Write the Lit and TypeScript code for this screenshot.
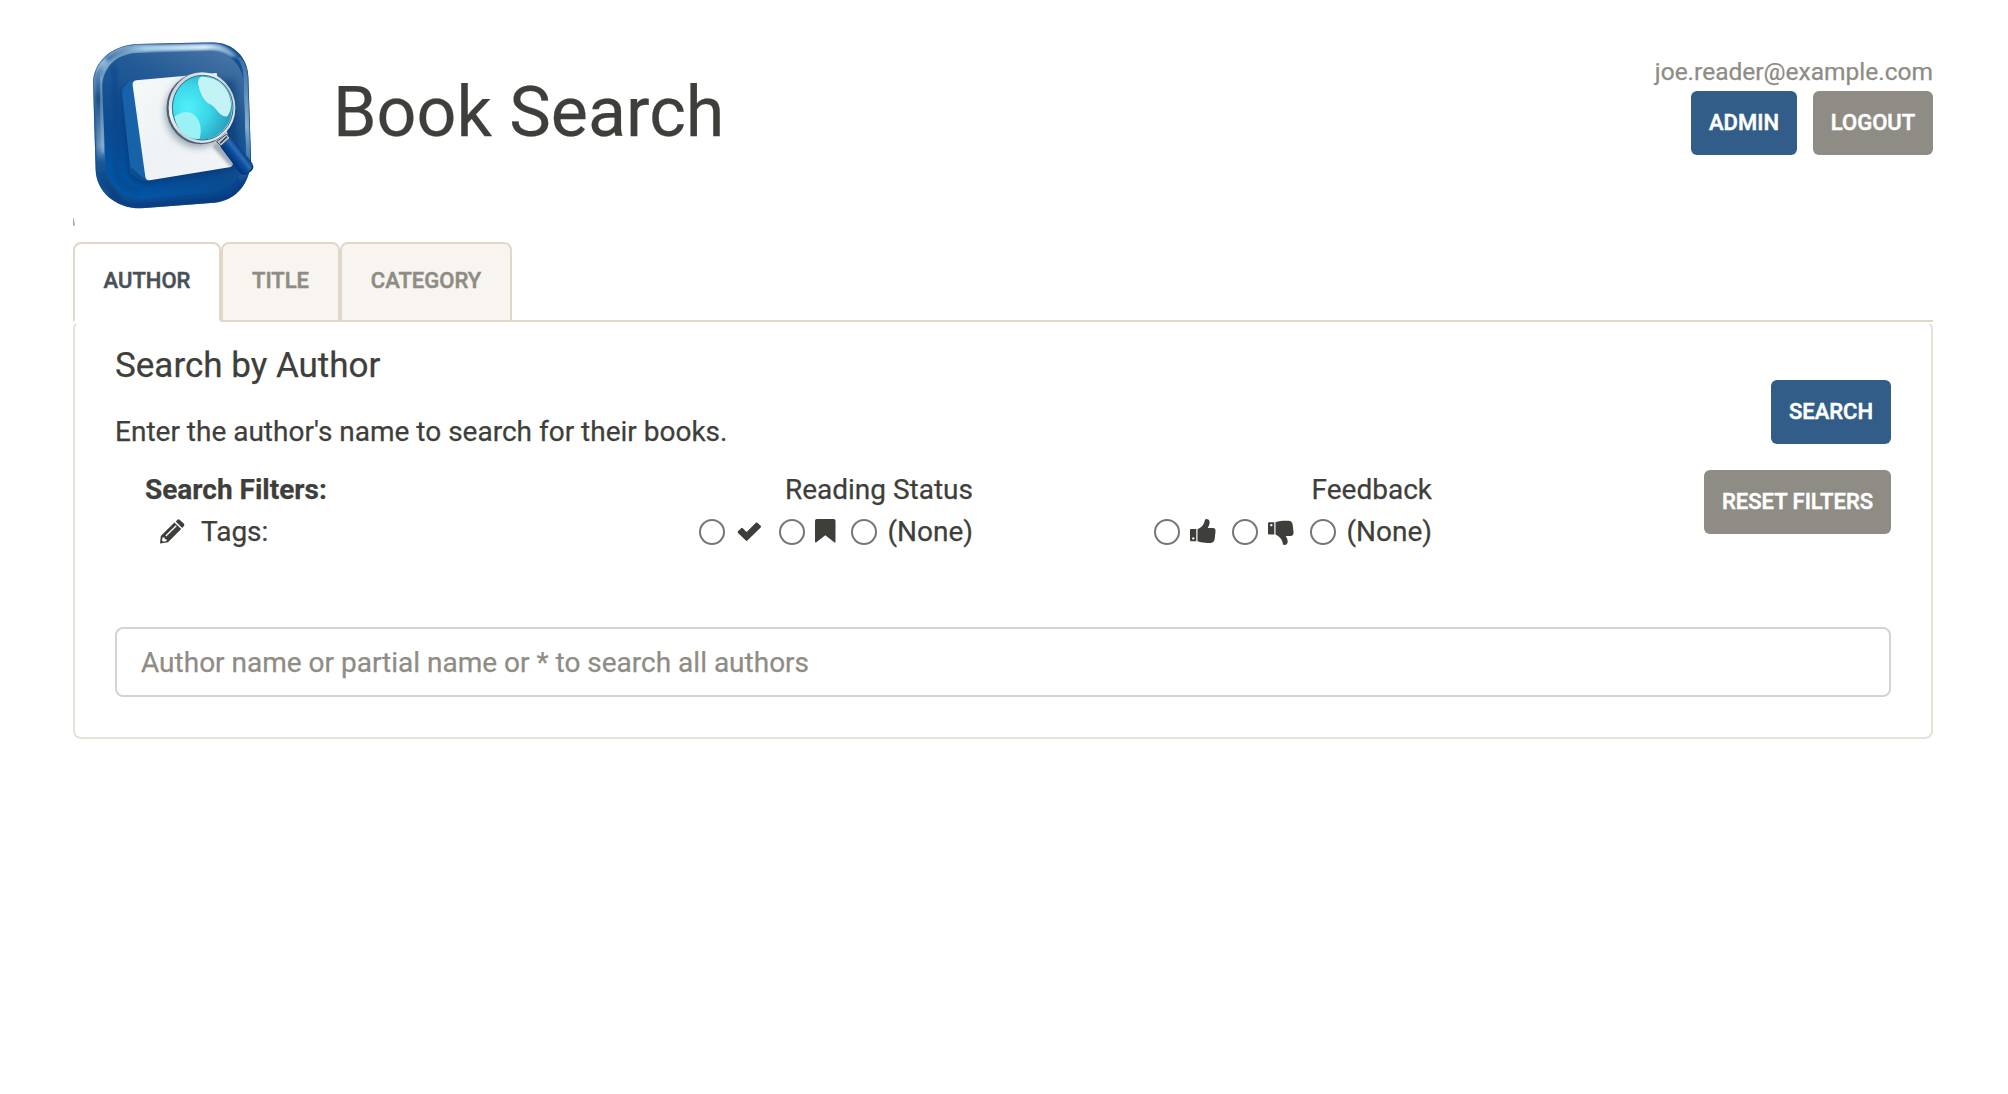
import { LitElement, html, css, svg } from "lit";
import { customElement, property, state } from "lit/decorators.js";

const icons = {
  pencil: svg`<path fill-rule="evenodd" d="M0 24.500L.8 17L14.400 3.400L21.200 10.100L8 23.300ZM2.500 18.600L2 21.400L3.400 22.800L6.500 21.900L6.700 20.400L4.800 20.100L4.400 18.200ZM5.400 16.600L6.300 17.500L16.700 7.200L15.800 6.300ZM15.700 2.400L17.200 .9Q18.400 -.3 19.800 .9L23.800 4.600Q25.100 6 23.800 7.300L22.200 8.900Z"/>`,
  check: svg`<path d="M1 12.300L4.100 9.200Q4.900 8.500 5.700 9.200L9.600 13L18.900 3.800Q19.700 3 20.500 3.800L23.800 7Q24.500 7.800 23.700 8.600L10.400 21.600Q9.600 22.300 8.800 21.600L1 13.900Q.2 13.100 1 12.300Z"/>`,
  bookmark: svg`<path d="M1.800 0H18.700Q20.500 0 20.500 1.800V22.300Q20.500 24.300 18.900 23L10.300 16.200L1.700 23Q0 24.300 0 22.300V1.800Q0 0 1.800 0Z"/>`,
  up: svg`<path fill-rule="evenodd" d="M0 10.800Q0 9.900 1 9.900H6.300V22.300H1Q0 22.300 0 21.300ZM3.300 18.200A1.200 1.200 0 1 0 3.310 18.200ZM7.500 10.200C10.500 9 13.600 6.500 14.500 2.800C14.700 1.300 15 .1 16.500 .1C19.300 .1 20.400 3 19.200 5.800L17.800 9H23C25 9 25.800 10.700 25.500 12.700L24.700 19.500C24.400 22.500 23.200 23.700 20.500 23.900C15.700 24.200 11.800 23.800 7.500 22.300Z"/>`,
  down: svg`<path fill-rule="evenodd" d="M0 4.200Q0 3.200 1 3.200H6.300V15.600H1Q0 15.600 0 14.600ZM3.300 4.900A1.200 1.200 0 1 0 3.310 4.900ZM7.500 3.300C11.800 1.800 15.700 1.500 20.500 1.800C23.200 2 24.400 3.200 24.700 6L25.500 13C25.800 15.200 25 16.900 23 16.900H17.800L19.200 20.100C20.400 23 19.300 26 16.500 26C15 26 14.700 24.700 14.500 23.300C13.600 19.500 10.500 16.900 7.500 15.600Z"/>`,
};

@customElement("glyph-icon")
class GlyphIcon extends LitElement {
  @property() name: keyof typeof icons = "check";
  static styles = css`
    :host { display: block; width: 26px; height: 26px; }
    svg { display: block; fill: currentColor; overflow: visible; }
  `;
  render() {
    return html`<svg width="26" height="26" viewBox="0 0 26 26">${icons[this.name]}</svg>`;
  }
}

@customElement("book-logo")
class BookLogo extends LitElement {
  static styles = css`
    :host { display: block; width: 220px; height: 220px; }
    svg { display: block; }
  `;
  render() {
    return html`<svg width="220" height="220" viewBox="0 0 660 660">
      <defs>
        <linearGradient id="rim" x1="0" y1="0" x2="1" y2="1">
          <stop offset="0" stop-color="#2f659b"/><stop offset=".12" stop-color="#8fb8d8"/>
          <stop offset=".25" stop-color="#215d9b"/><stop offset=".6" stop-color="#0b4c92"/>
          <stop offset="1" stop-color="#05408a"/>
        </linearGradient>
        <linearGradient id="top" x1="0" y1="0" x2="1" y2="0">
          <stop offset="0" stop-color="#3a6ea3"/><stop offset=".3" stop-color="#a8cce6"/>
          <stop offset=".75" stop-color="#d9edf9"/><stop offset="1" stop-color="#5c8db9"/>
        </linearGradient>
        <linearGradient id="left" x1="0" y1="0" x2="0" y2="1">
          <stop offset="0" stop-color="#6d9bc4"/><stop offset=".25" stop-color="#1c4f88"/>
          <stop offset=".6" stop-color="#6c99c2"/><stop offset=".72" stop-color="#155898"/>
          <stop offset="1" stop-color="#063a76"/>
        </linearGradient>
        <linearGradient id="face" x1=".8" y1="0" x2=".3" y2="1">
          <stop offset="0" stop-color="#4472a2"/><stop offset=".3" stop-color="#235b96"/>
          <stop offset=".7" stop-color="#0b4b91"/><stop offset="1" stop-color="#0255a5"/>
        </linearGradient>
        <linearGradient id="right" x1="0" y1="0" x2="0" y2="1">
          <stop offset="0" stop-color="#3a6fa3"/><stop offset=".55" stop-color="#84add0"/>
          <stop offset="1" stop-color="#0c4a91"/>
        </linearGradient>
        <linearGradient id="paper" x1="0" y1="0" x2="1" y2="1">
          <stop offset="0" stop-color="#f6f9fa"/><stop offset=".5" stop-color="#eef2f4"/>
          <stop offset="1" stop-color="#f3f5f7"/>
        </linearGradient>
        <radialGradient id="lens" cx=".28" cy=".5" r=".72">
          <stop offset="0" stop-color="#50f0f8"/><stop offset=".45" stop-color="#3bd8e8"/>
          <stop offset="1" stop-color="#2797ba"/>
        </radialGradient>
        <linearGradient id="ring" x1="0" y1="0" x2="1" y2="1">
          <stop offset="0" stop-color="#aab4be"/><stop offset=".3" stop-color="#f2f5f7"/>
          <stop offset=".55" stop-color="#c5ced6"/><stop offset="1" stop-color="#eef2f5"/>
        </linearGradient>
        <linearGradient id="grip" gradientUnits="userSpaceOnUse" x1="508" y1="420" x2="546" y2="390">
          <stop offset="0" stop-color="#022f73"/><stop offset=".45" stop-color="#0a4c9d"/>
          <stop offset=".7" stop-color="#2a6db3"/><stop offset="1" stop-color="#073a80"/>
        </linearGradient>
        <filter id="soft" x="-20%" y="-20%" width="140%" height="140%"><feGaussianBlur stdDeviation="5"/></filter>
        <filter id="shade" x="-30%" y="-30%" width="160%" height="160%"><feGaussianBlur stdDeviation="11"/></filter>
        <clipPath id="sheet"><path d="M229 181L470 159L518 430Q519 440 508 442L270 481Q258 482 256 470L218 196Q217 183 229 181Z"/></clipPath>
        <clipPath id="body"><path d="M230 72L455 67C520 67 563 112 565 170L573 415C573 488 528 544 462 548L245 565C168 567 109 515 107 450L99 190C99 130 150 76 230 72Z"/></clipPath>
      </defs>
      <g clip-path="url(#body)">
        <path fill="url(#rim)" d="M80 50H600V580H80Z"/>
        <path fill="url(#top)" filter="url(#soft)" d="M135 115Q170 82 230 76L455 71Q500 70 535 112L510 110Q485 92 450 91L235 96Q180 100 145 125Z"/>
        <path fill="url(#left)" filter="url(#soft)" d="M103 160L127 135L140 440Q145 490 190 540L150 518Q112 490 111 440Z"/>
        <path d="M122 165L130 400" stroke="#b9d4e8" stroke-width="8" opacity=".6" filter="url(#soft)"/>
        <path fill="url(#right)" d="M540 112Q561 130 564 160L572 415Q572 455 549 488L530 470Q558 435 557 400L550 170Q550 135 530 112Z"/>
        <path fill="url(#face)" d="M230 99L440 94C510 94 550 135 551 195L558 405C558 470 505 517 435 520L250 536C183 538 138 488 136 430L127 205C126 145 165 102 230 99Z"/>
        <path d="M162 135L170 460Q180 505 235 515" fill="none" stroke="#0a4589" stroke-width="14" opacity=".6" filter="url(#soft)"/>
        <path fill="none" stroke="#092f72" stroke-width="12" opacity=".55" filter="url(#soft)" d="M150 525Q190 560 245 556L462 541Q530 535 560 478"/>
        <path fill="none" stroke="#123f74" stroke-width="5" opacity=".55" d="M230 72L455 67C520 67 563 112 565 170L573 415C573 488 528 544 462 548L245 565C168 567 109 515 107 450L99 190C99 130 150 76 230 72Z"/>
      </g>
      <path fill="#032d6b" opacity=".5" filter="url(#shade)" d="M180 205L525 180L535 450L250 498L205 470Z"/>
      <path fill="#1762a8" d="M187 207L208 184L228 181L262 481L246 483L215 463Q212 458 211 450L186 220Z"/>
      <path fill="#0b4c8f" d="M215 463L211 440L249 474L262 481L246 483Z"/>
      <path fill="url(#paper)" d="M229 181L470 159L518 430Q519 440 508 442L270 481Q258 482 256 470L218 196Q217 183 229 181Z"/>
      <g clip-path="url(#sheet)">
        <ellipse cx="413" cy="276" rx="98" ry="106" fill="#5d7487" opacity=".6" filter="url(#shade)"/>
        <path d="M465 372L540 455" stroke="#53697e" stroke-width="22" opacity=".5" filter="url(#soft)"/>
      </g>
      <path fill="url(#grip)" d="M481 380L511 348L577 430Q584 446 567 457Q553 468 543 463Z"/>
      <path fill="#06316f" d="M548 463Q570 461 579 434Q584 447 567 458Q555 467 548 463Z"/>
      <path fill="#bcc8d2" stroke="#32465a" stroke-width="3" d="M470 365L500 342L510 354L483 378Z"/>
      <path d="M480 370L501 350" stroke="#263746" stroke-width="4"/>
      <ellipse cx="422" cy="265" rx="99" ry="104" fill="none" stroke="#4b6073" stroke-width="7"/>
      <ellipse cx="426" cy="263" rx="95" ry="101" fill="url(#lens)" stroke="url(#ring)" stroke-width="10"/>
      <ellipse cx="428" cy="263" rx="91" ry="97" fill="none" stroke="#28708f" stroke-width="3"/>
      <path fill="#c4f3f6" d="M424 170Q478 170 502 214Q524 259 502 289Q486 294 465 264Q456 253 443 249Q422 231 414 192Q413 174 424 170Z"/>
      <path fill="#9bf2f5" d="M343 290Q373 267 399 281Q431 306 419 356Q391 361 365 337Q348 316 343 290Z"/>
      <path fill="#a9a9b4" d="M39 592Q44 602 45 617H39Z"/>
    </svg>`;
  }
}

@customElement("app-root")
class AppRoot extends LitElement {
  @state() private tab = "Author";

  static styles = css`
    :host {
      display: block; box-sizing: border-box; width: 100%; min-height: 1094px;
      padding: 20px 75px 0 73px; background: #fff; color: #3e3f3a;
      font: 400 28px/42px Roboto, "Liberation Sans", sans-serif;
      -webkit-text-stroke: 0.25px currentColor;
    }
    * { box-sizing: border-box; }
    header { display: flex; height: 222px; }
    book-logo { margin-left: -13px; }
    h1 { margin: 50px 0 0 53px; font-weight: 400; font-size: 70px; line-height: 84px; white-space: nowrap; }
    .account { margin-left: auto; padding-top: 32px; display: flex; flex-direction: column; align-items: flex-end; }
    .email { font-size: 24.5px; line-height: 39px; color: #8e8c84; }
    .actions { display: flex; gap: 16px; }
    button { font: inherit; cursor: pointer; -webkit-text-stroke: 0.5px currentColor; }
    .btn {
      height: 64px; padding: 0; border: 0; border-radius: 6px; color: #fff; background: #325d88;
      font-size: 22px; font-weight: 500; line-height: 64px; text-transform: uppercase; white-space: nowrap;
    }
    .muted { background: #8e8c84; }
    .admin { width: 106px; }
    .logout, .search { width: 120px; }
    .reset { width: 187px; }
    .tabs { display: flex; height: 80px; border-bottom: 2px solid #dfd7ca; }
    .tab {
      height: 80px; border: 2px solid #dfd7ca; border-radius: 8px 8px 0 0; background: #f8f5f0;
      color: #8e8c84; font-size: 22px; font-weight: 500; text-transform: uppercase; padding: 0 0 2px;
    }
    .tab.active { background: #fff; color: #495057; border-bottom-color: #fff; }
    .author { width: 148px; } .title { width: 119px; } .category { width: 172px; }
    .card {
      height: 418px; margin-top: -1px; border: 2px solid #e7e1d7; border-top-color: transparent; border-radius: 8px;
      padding: 22px 40px 40px; display: flex; flex-direction: column; justify-content: space-between;
    }
    .top { display: flex; justify-content: space-between; }
    h5 { margin: 0; font-size: 35px; line-height: 42px; font-weight: 400; }
    p { margin: 24px 0 0; line-height: 42px; }
    .filters { display: flex; margin: 16px 0 0 30px; }
    .label { font-weight: 700; }
    .group { display: flex; flex-direction: column; align-items: flex-end; }
    .first { width: 369px; }
    .status { width: 459px; }
    .feedback { width: 459px; }
    .row { display: flex; align-items: center; height: 42px; }
    .first .row { padding-left: 15px; }
    .row span { white-space: nowrap; }
    .tags { margin-left: 15px; }
    .radio { appearance: none; width: 26px; height: 26px; margin: 0; border: 2px solid #767676; border-radius: 50%; background: #fff; }
    .radio:checked { background: #325d88; box-shadow: inset 0 0 0 4px #fff; }
    .status .radio + glyph-icon { margin: 0 16px 0 12px; }
    .status .mark { width: 20px; }
    .status .radio + .mark { margin: 0 16px 0 10px; }
    .feedback .radio + glyph-icon { margin: 0 16px 0 10px; }
    .none { margin-left: 10px; }
    .side { padding-top: 35px; display: flex; flex-direction: column; align-items: flex-end; gap: 26px; }
    .query {
      width: 100%; height: 70px; border: 2px solid #ced4da; border-radius: 8px; padding: 0 24px;
      font: inherit; color: #3e3f3a; background: #fff; outline: none;
      -webkit-text-stroke: inherit;
    }
    .query::placeholder { color: #8e8c84; opacity: 1; }
  `;

  private renderTab(name: string) {
    return html`<button class="tab ${name.toLowerCase()} ${this.tab === name ? "active" : ""}"
      @click=${() => (this.tab = name)}>${name}</button>`;
  }

  render() {
    return html`
      <header>
        <book-logo></book-logo>
        <h1>Book Search</h1>
        <div class="account">
          <div class="email">joe.reader@example.com</div>
          <div class="actions">
            <button class="btn admin">Admin</button>
            <button class="btn muted logout">Logout</button>
          </div>
        </div>
      </header>
      <nav class="tabs">${["Author", "Title", "Category"].map((t) => this.renderTab(t))}</nav>
      <section class="card">
        <div class="top">
          <div>
            <h5>Search by Author</h5>
            <p>Enter the author's name to search for their books.</p>
            <div class="filters">
              <div class="first">
                <div class="label">Search Filters:</div>
                <div class="row"><glyph-icon name="pencil"></glyph-icon><span class="tags">Tags:</span></div>
              </div>
              <div class="group status">
                <div>Reading Status</div>
                <div class="row">
                  <input class="radio" type="radio" name="status"><glyph-icon name="check"></glyph-icon>
                  <input class="radio" type="radio" name="status"><glyph-icon class="mark" name="bookmark"></glyph-icon>
                  <input class="radio" type="radio" name="status"><span class="none">(None)</span>
                </div>
              </div>
              <div class="group feedback">
                <div>Feedback</div>
                <div class="row">
                  <input class="radio" type="radio" name="feedback"><glyph-icon name="up"></glyph-icon>
                  <input class="radio" type="radio" name="feedback"><glyph-icon name="down"></glyph-icon>
                  <input class="radio" type="radio" name="feedback"><span class="none">(None)</span>
                </div>
              </div>
            </div>
          </div>
          <div class="side">
            <button class="btn search">Search</button>
            <button class="btn muted reset">Reset Filters</button>
          </div>
        </div>
        <input class="query" type="text" placeholder="Author name or partial name or * to search all authors">
      </section>
    `;
  }
}
